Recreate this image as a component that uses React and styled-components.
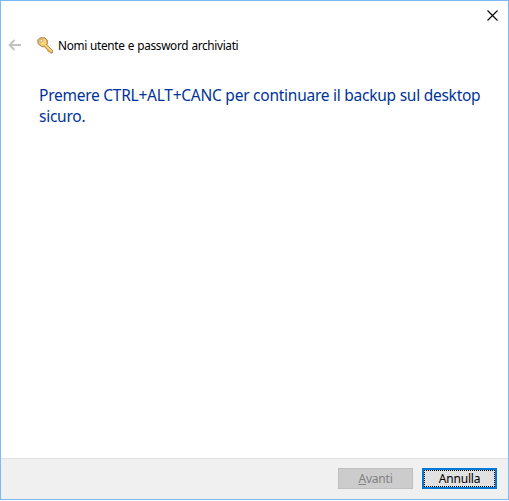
import React from 'react';
import styled, { createGlobalStyle } from 'styled-components';

const GlobalStyle = createGlobalStyle`
  * { box-sizing: border-box; }
  body { margin: 0; background: #fff; overflow: hidden; }
`;

const Dialog = styled.main`
  display: flex;
  flex-direction: column;
  width: 509px;
  height: 500px;
  border: 1px solid #7db9f5;
  background: #fff;
  color: #000;
  font-family: "Noto Sans", "Open Sans", sans-serif;
`;

const TitleBar = styled.div`
  display: flex;
  justify-content: flex-end;
  height: 30px;
`;

const CloseButton = styled.button`
  display: flex;
  padding: 9px 10px 0 0;
  border: 0;
  background: none;
`;

const Header = styled.header`
  display: flex;
  align-items: center;
  height: 28px;
  padding-left: 7px;
`;

const BackButton = styled.button`
  display: flex;
  width: 29px;
  padding: 0;
  border: 0;
  background: none;
`;

const Title = styled.h1`
  margin: 1px 0 0 5px;
  font-size: 11.8px;
  font-weight: 400;
  line-height: 17px;
  white-space: nowrap;
  letter-spacing: -0.33px;
  word-spacing: 0.5px;
`;

const Content = styled.section`
  flex: 1;
  padding: 26px 0 0 38px;
`;

const Instruction = styled.p`
  width: 446px;
  margin: 0;
  color: #003399;
  font-size: 15.5px;
  line-height: 21px;
  letter-spacing: -0.25px;
`;

const Footer = styled.footer`
  display: flex;
  gap: 9px;
  justify-content: flex-end;
  height: 41px;
  padding: 9px 11px 0 0;
  border-top: 1px solid #dfdfdf;
  background: #f0f0f0;
`;

const Button = styled.button`
  width: 75px;
  height: 21px;
  padding: 0;
  border: ${(p) => (p.$focused ? '2px solid #0078d7' : '1px solid #bfbfbf')};
  background: ${(p) => (p.$focused ? '#e1e1e1' : '#cccccc')};
  color: ${(p) => (p.disabled ? '#838383' : '#000')};
  font: 12px/17px "Noto Sans", "Open Sans", sans-serif;
  letter-spacing: -0.2px;
  outline: ${(p) => (p.$focused ? '1px dotted #000' : 'none')};
  outline-offset: -3px;
`;

const Icon = styled.svg`
  display: block;
  flex: none;
`;

export default function App() {
  return (
    <>
      <GlobalStyle />
      <Dialog>
        <TitleBar>
          <CloseButton aria-label="Chiudi">
            <Icon width="11" height="11" viewBox="0 0 11 11">
              <path d="M.5.5 10.5 10.5M10.5.5.5 10.5" stroke="#000" strokeWidth="1.1" />
            </Icon>
          </CloseButton>
        </TitleBar>
        <Header>
          <BackButton aria-label="Indietro">
            <Icon width="14" height="12" viewBox="0 0 14 12">
              <path d="M13 6H2M6.5 1 1.6 6 6.5 11" fill="none" stroke="#c2c2c2" strokeWidth="2" />
            </Icon>
          </BackButton>
          <Icon width="16" height="17" viewBox="0 0 16 17">
            <path
              d="M.8 3 2.8.9 7.5.7 10.2 3 10.4 6.7 9.7 8 15.7 13.5 15.6 16 13.6 16 12.4 14.6 11.3 14.6 10.5 12.7 7.4 9.8 4.5 9.6 1 6.6Z"
              fill="#edb64e"
              stroke="#9b7141"
              strokeWidth=".8"
              strokeLinejoin="round"
            />
            <path d="M2 3.4 3.4 2 7 1.8 9 3.7 9.1 6.6 7.2 8.4 4.9 8.3 2.1 6Z" fill="#f8d67e" />
            <path d="M8.4 8.3 14.8 14.6" stroke="#ffdc7b" strokeWidth="1.2" />
            <path d="m3 3.3 1.4-.8 1.7.7-1.8 2.1-1.3-.5Z" fill="#fff" stroke="#a8875a" strokeWidth=".7" />
          </Icon>
          <Title>Nomi utente e password archiviati</Title>
        </Header>
        <Content>
          <Instruction>Premere CTRL+ALT+CANC per continuare il backup sul desktop sicuro.</Instruction>
        </Content>
        <Footer>
          <Button disabled>
            <u>A</u>vanti
          </Button>
          <Button $focused>Annulla</Button>
        </Footer>
      </Dialog>
    </>
  );
}
